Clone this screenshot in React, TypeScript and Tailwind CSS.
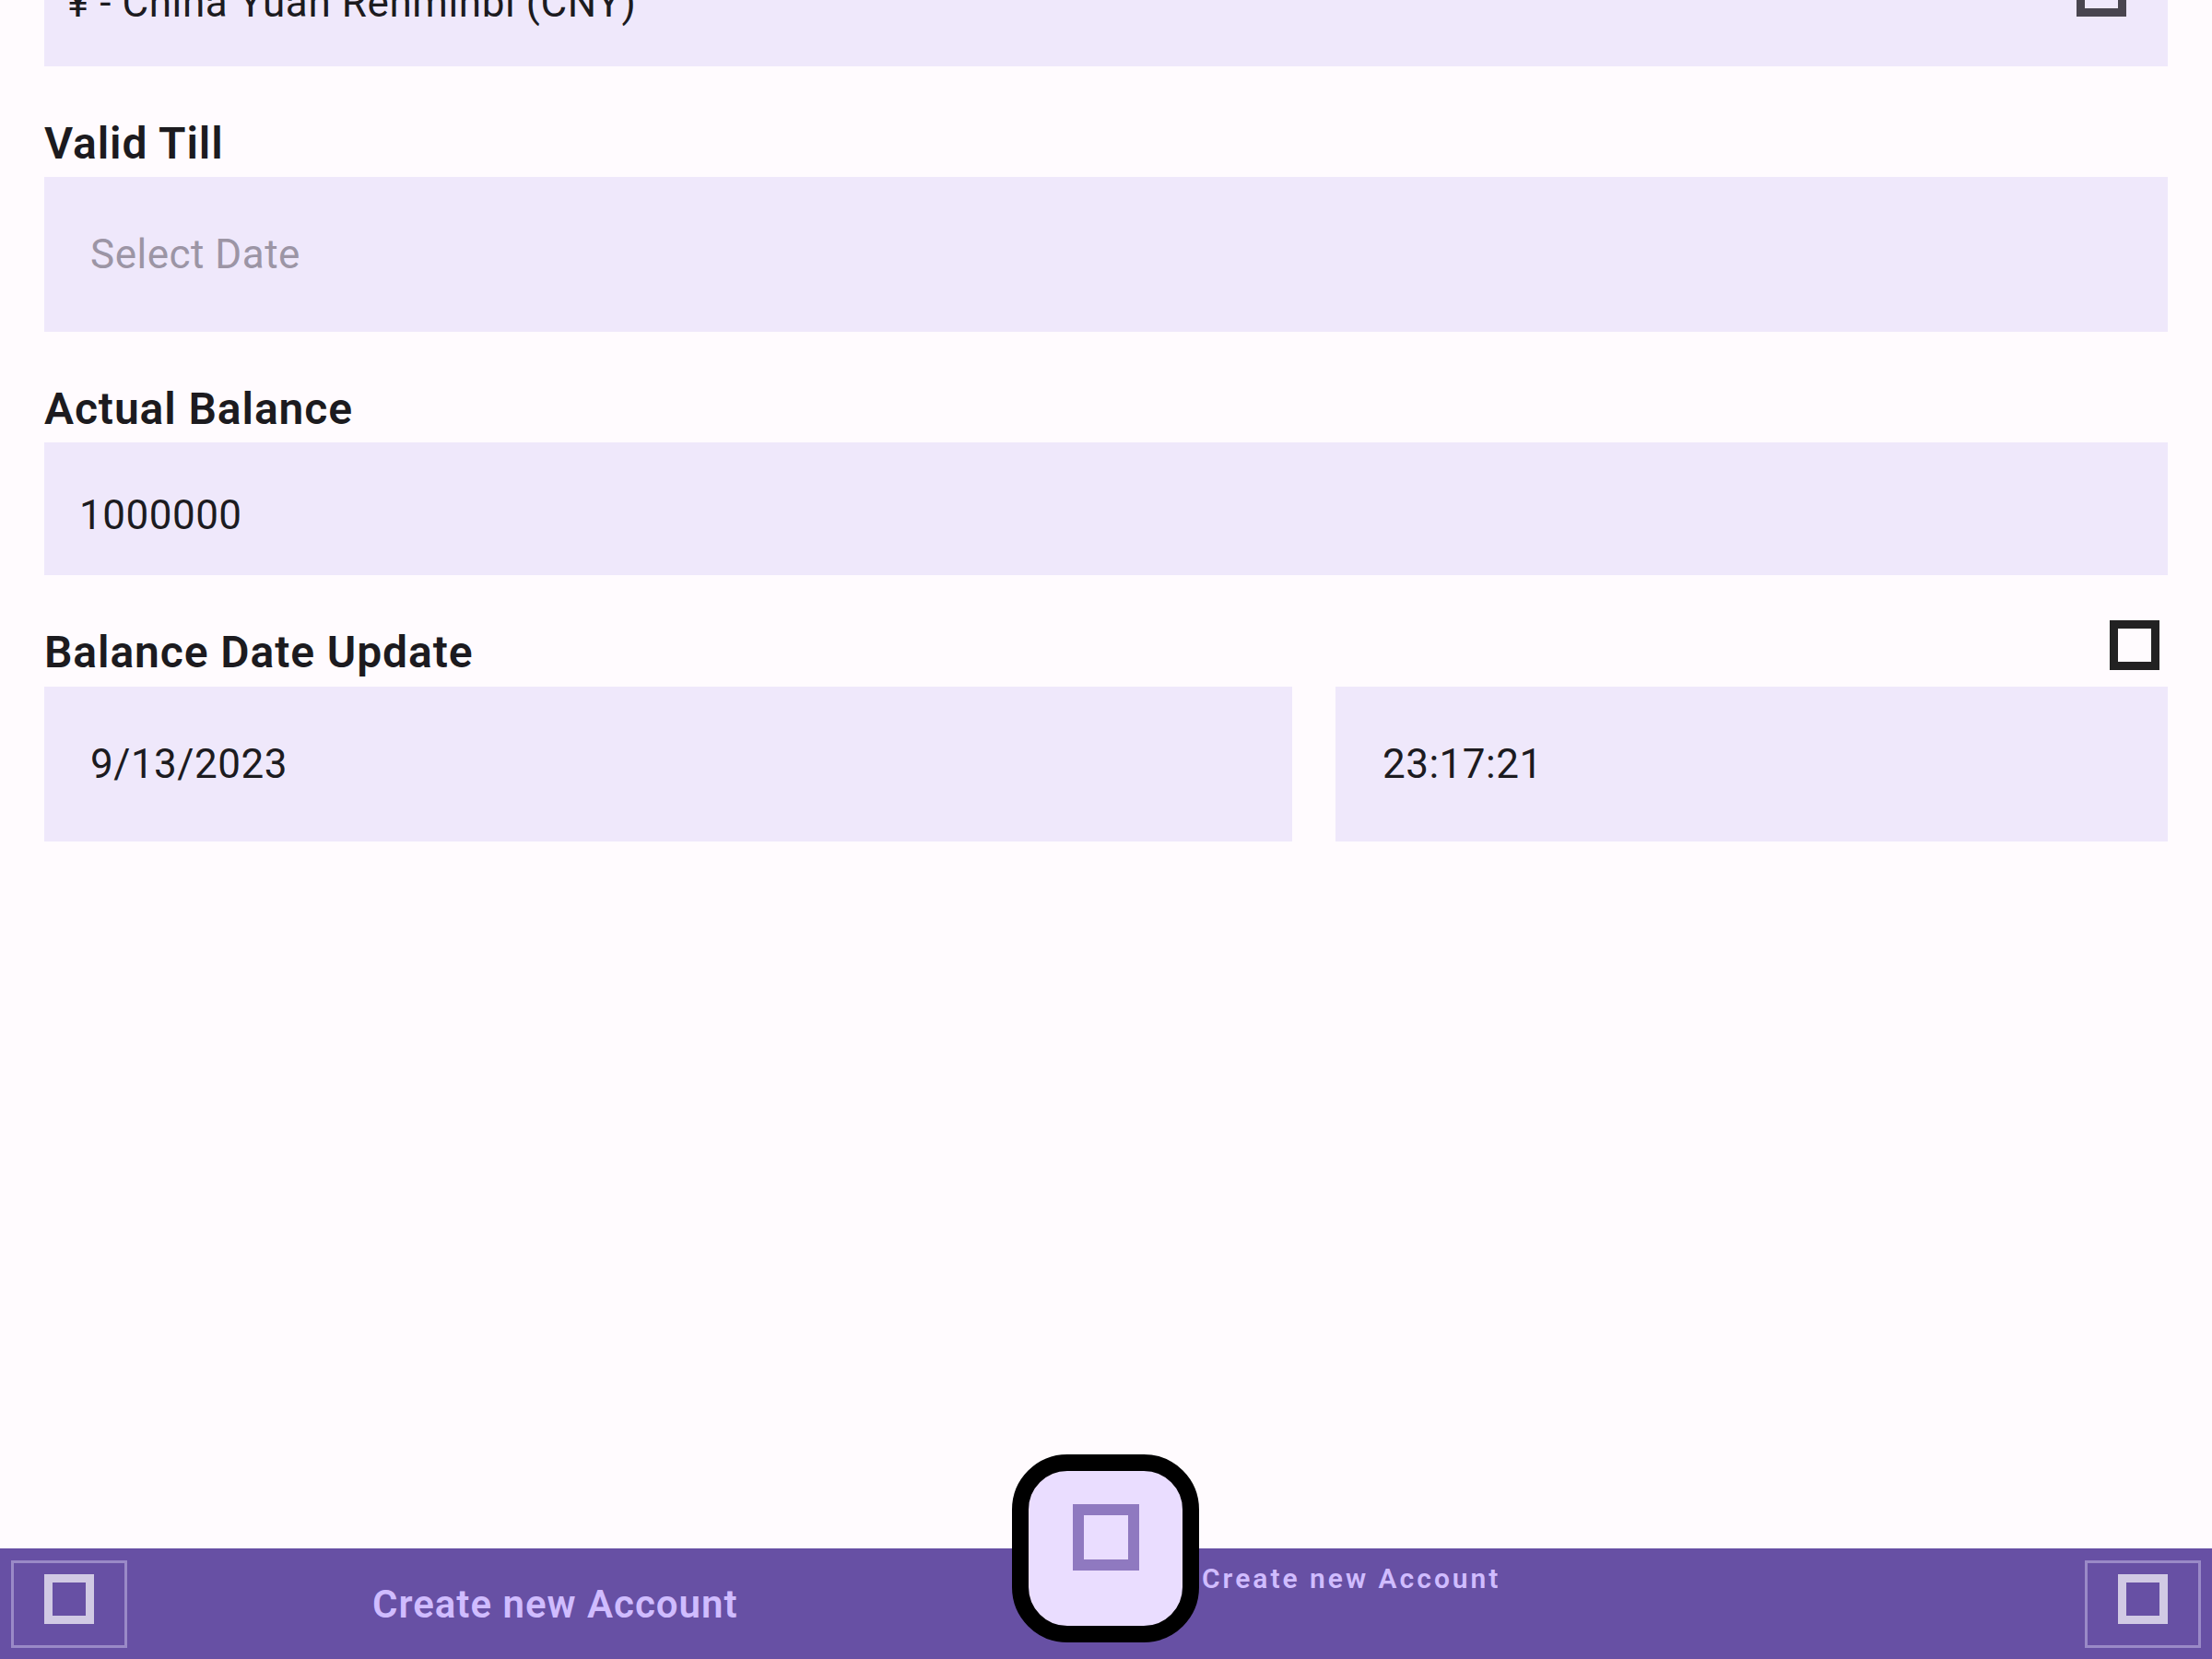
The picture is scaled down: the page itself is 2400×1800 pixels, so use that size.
import React from 'react';

function Tofu({ className }: { className: string }) {
  return <div className={className} />;
}

function FieldLabel({ text }: { text: string }) {
  return (
    <div className="text-[48px] leading-[48px] font-semibold tracking-[0.9px] text-[#1c1b1f]">
      {text}
    </div>
  );
}

export default function App() {
  return (
    <div className="relative w-[2400px] h-[1800px] overflow-hidden bg-[#fffbfe] font-['Roboto',sans-serif]">
      <div className="flex flex-col px-[48px]">
        {/* currency dropdown, scrolled half out of view */}
        <div className="-mt-[96px] h-[168px] bg-[#efe8fb] flex items-start justify-between pl-[25px] pr-[45px]">
          <div className="mt-[77px] text-[44px] leading-[44px] tracking-[0.6px] text-[#1c1b1f]">
            ¥ - China Yuan Renminbi (CNY)
          </div>
          <Tofu className="mt-[60px] w-[54px] h-[54px] border-[9px] border-[#49454f]" />
        </div>

        <div className="mt-[60px]">
          <FieldLabel text="Valid Till" />
        </div>
        <div className="mt-[12px] h-[168px] bg-[#efe8fb] flex items-center pl-[50px]">
          <span className="text-[44px] leading-[44px] tracking-[0.5px] text-[#9c95a5]">Select Date</span>
        </div>

        <div className="mt-[60px]">
          <FieldLabel text="Actual Balance" />
        </div>
        <div className="mt-[12px] h-[144px] bg-[#efe8fb] flex items-center pl-[38px] pt-[14px]">
          <span className="text-[44px] leading-[44px] tracking-[0.5px] text-[#1c1b1f]">1000000</span>
        </div>

        <div className="mt-[60px] flex items-center justify-between">
          <FieldLabel text="Balance Date Update" />
          <Tofu className="mr-[9px] -mt-[16px] w-[54px] h-[54px] border-[9px] border-[#222222]" />
        </div>
        <div className="mt-[13px] flex gap-[47px]">
          <div className="w-[1354px] h-[168px] bg-[#efe8fb] flex items-center pl-[50px]">
            <span className="text-[44px] leading-[44px] tracking-[0.5px] text-[#1c1b1f]">9/13/2023</span>
          </div>
          <div className="flex-1 h-[168px] bg-[#efe8fb] flex items-center pl-[51px]">
            <span className="text-[44px] leading-[44px] tracking-[0.5px] text-[#1c1b1f]">23:17:21</span>
          </div>
        </div>
      </div>

      {/* bottom app bar */}
      <div className="absolute left-0 right-0 bottom-0 h-[120px] bg-[#6750a4] flex items-center px-[12px]">
        <div className="w-[126px] h-[95px] border-[3px] border-[#9a8ac7] flex justify-center pt-[12px]">
          <Tofu className="w-[54px] h-[54px] border-[9px] border-[#d1cae4]" />
        </div>
        <div className="ml-[266px] mt-[2px] text-[42px] leading-[42px] font-semibold tracking-[1px] text-[#d0bcff]">
          Create new Account
        </div>
        <div className="flex-1" />
        <div className="w-[126px] h-[95px] border-[3px] border-[#9a8ac7] flex justify-center pt-[12px]">
          <Tofu className="w-[54px] h-[54px] border-[9px] border-[#d1cae4]" />
        </div>
      </div>

      {/* floating action button with its label */}
      <div className="absolute left-[1098px] top-[1578px] flex items-start">
        <div className="w-[203px] h-[204px] rounded-[60px] border-[18px] border-black bg-[#eaddff] flex justify-center pt-[36px]">
          <Tofu className="w-[72px] h-[72px] border-[12px] border-[#8f79c0]" />
        </div>
        <div className="ml-[3px] mt-[120px] text-[30px] leading-[30px] font-semibold tracking-[3px] text-[#d0bcff]">
          Create new Account
        </div>
      </div>
    </div>
  );
}
